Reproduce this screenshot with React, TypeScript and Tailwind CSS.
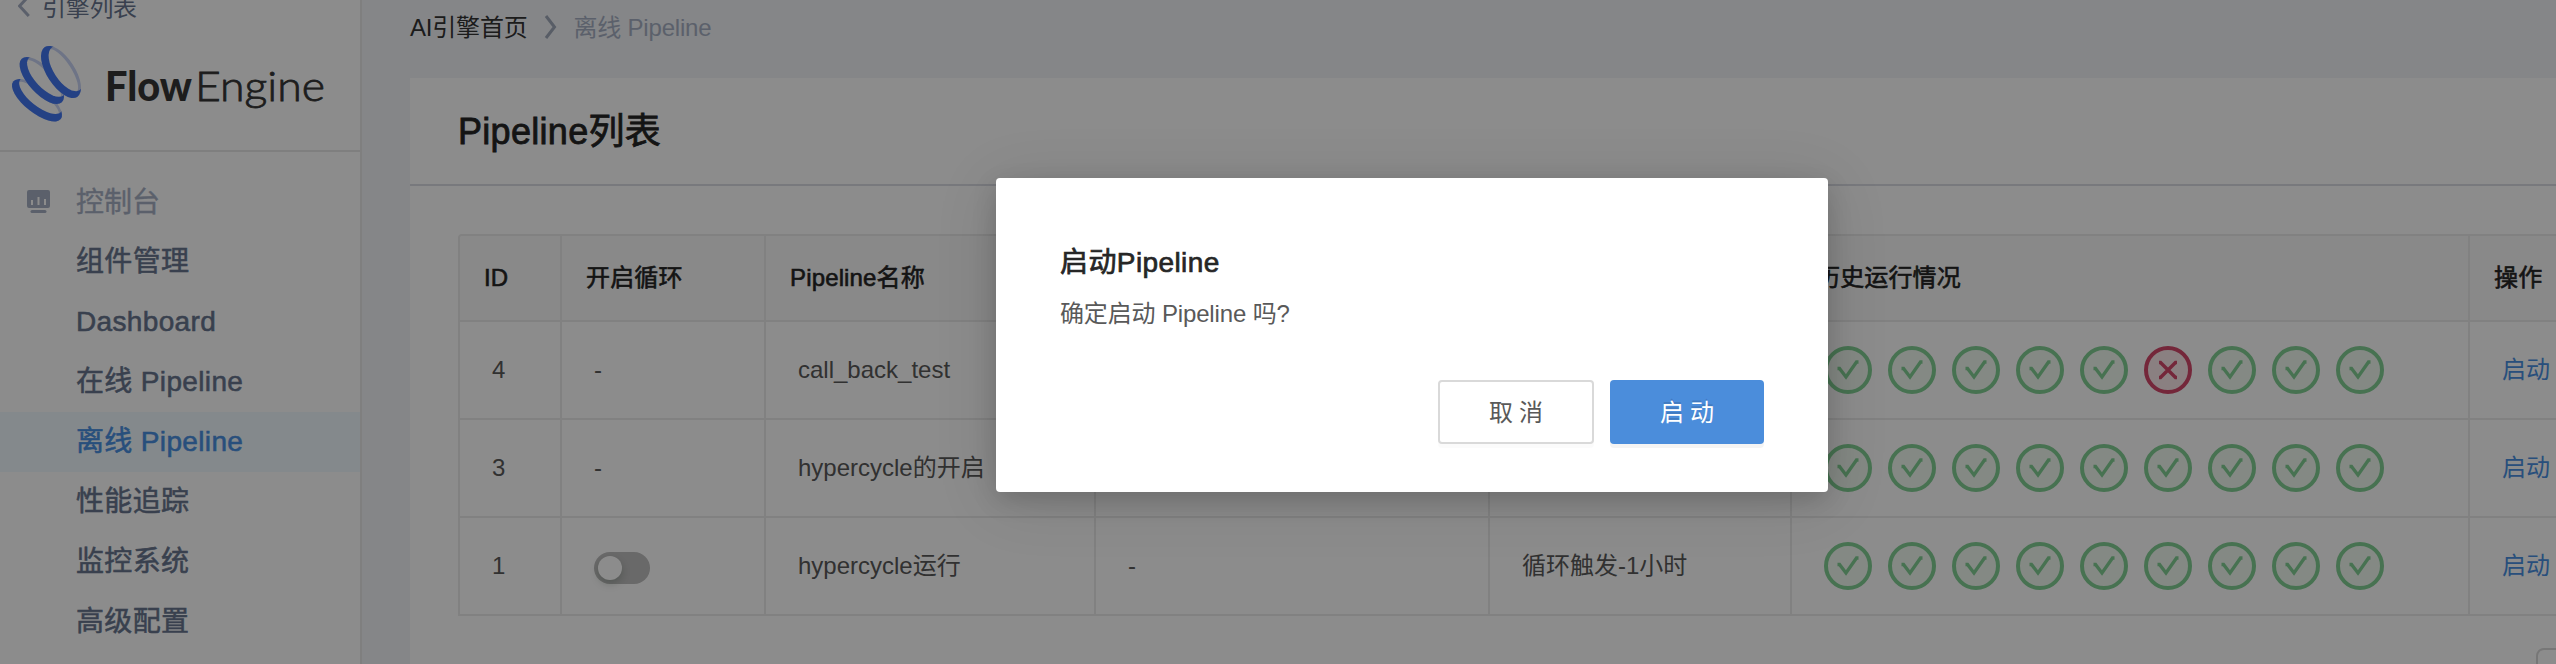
import React from "react";

const FONT = "font-['Liberation_Sans','Noto_Sans_CJK_SC',sans-serif]";

type Run = "ok" | "fail";

interface Pipeline {
  id: number;
  loop: boolean;
  name: string;
  note: string;
  trigger: string;
  history: Run[];
}

const ok = (n: number): Run[] => Array.from({ length: n }, () => "ok" as Run);

const pipelines: Pipeline[] = [
  { id: 4, loop: false, name: "call_back_test", note: "", trigger: "", history: [...ok(5), "fail", ...ok(3)] },
  { id: 3, loop: false, name: "hypercycle的开启", note: "", trigger: "", history: ok(9) },
  { id: 1, loop: true, name: "hypercycle运行", note: "-", trigger: "循环触发-1小时", history: ok(9) },
];

const menu = ["组件管理", "Dashboard", "在线 Pipeline", "离线 Pipeline", "性能追踪", "监控系统", "高级配置"];

const rings = [
  { id: "r1", cx: 37, cy: 70.3, angle: 38.3, rx: 30.3, ry: 12.5 },
  { id: "r2", cx: 41.8, cy: 50.5, angle: 47.4, rx: 29.6, ry: 13 },
  { id: "r3", cx: 61, cy: 42, angle: 57, rx: 29.7, ry: 14 },
];

function Logo() {
  return (
    <svg width="340" height="100" viewBox="0 0 340 100" className="block">
      {rings.map((r) => (
        <g key={r.id} transform={`translate(${r.cx} ${r.cy}) rotate(${r.angle})`}>
          <mask id={`${r.id}-hole`} maskUnits="userSpaceOnUse" x="-40" y="-30" width="80" height="60">
            <rect x="-40" y="-30" width="80" height="60" fill="white" />
            <ellipse cy={-2} rx={r.rx - 4.5} ry={r.ry - 5.5} fill="black" />
          </mask>
          <mask id={`${r.id}-front`} maskUnits="userSpaceOnUse" x="-40" y="-30" width="80" height="60">
            <rect x="-40" y="-30" width="80" height="60" fill="white" />
            <ellipse cy={-6} rx={r.rx - 4.2} ry={r.ry - 1.5} fill="black" />
          </mask>
          <ellipse rx={r.rx} ry={r.ry} fill="#c8d3f4" mask={`url(#${r.id}-hole)`} />
          <ellipse rx={r.rx} ry={r.ry} fill="#4377f0" mask={`url(#${r.id}-front)`} />
        </g>
      ))}
      <text x="105" y="71" fontFamily="Lato" fontWeight="900" fontSize="41" fill="#363636" textLength="87" lengthAdjust="spacingAndGlyphs">
        Flow
      </text>
      <text x="195" y="71" fontFamily="Lato" fontWeight="300" fontSize="41" fill="#363636" stroke="#363636" strokeWidth="0.8" textLength="130" lengthAdjust="spacingAndGlyphs">
        Engine
      </text>
    </svg>
  );
}

function Sidebar() {
  return (
    <aside className="flex h-full w-[362px] shrink-0 flex-col border-r-2 border-[#e8e8e8] bg-white">
      <div className="h-[152px] shrink-0 border-b-2 border-[#e8e8e8]">
        <div className="-mt-2 flex h-[38px] items-center pl-[18px] text-[24px] leading-[30px] text-[#68768f]">
          <svg width="12" height="22" viewBox="0 0 12 22" fill="none" stroke="#a7b0c4" strokeWidth="3" className="-mt-[10px] mr-3">
            <path d="M10.8 1 1.6 11l9.2 10" />
          </svg>
          <span className="-mt-[6px] tracking-[-0.3px]">引擎列表</span>
        </div>
        <Logo />
      </div>
      <nav className="flex flex-col pt-5 text-[28px]">
        <div className="flex h-[60px] items-center pl-[27px] text-[#a7b0c4]">
          <svg width="23" height="24" viewBox="0 0 23 24" className="mr-[26px]">
            <path
              fillRule="evenodd"
              fill="#a7b0c4"
              d="M2 0h19a2 2 0 0 1 2 2v14a2 2 0 0 1-2 2H2a2 2 0 0 1-2-2V2a2 2 0 0 1 2-2ZM4 10v5h2v-5ZM10.500 7v8h2V7ZM17 9v6h2V9Z"
            />
            <rect x="3.500" y="20" width="16" height="3" rx="1.500" fill="#a7b0c4" />
          </svg>
          <span className="pt-[2px] [-webkit-text-stroke:0.4px]">控制台</span>
        </div>
        {menu.map((item) => (
          <div
            key={item}
            className={
              "flex h-[60px] items-center pl-[76px] tracking-[0.35px] [-webkit-text-stroke:0.55px] " +
              (item === "离线 Pipeline" ? "bg-[#f0f9ff] text-[#4a90e2]" : "text-[#68768f]")
            }
          >
            {item}
          </div>
        ))}
      </nav>
    </aside>
  );
}

function RunIcon({ run }: { run: Run }) {
  return run === "ok" ? (
    <svg width="48" height="48" viewBox="0 0 48 48" fill="none" stroke="#82cf94">
      <circle cx="24" cy="24" r="22" fill="#f0f9f1" strokeWidth="4" />
      <path d="M13.500 22.500h2l6.500 8.500 10.500-15h2" strokeWidth="3.300" />
    </svg>
  ) : (
    <svg width="48" height="48" viewBox="0 0 48 48" fill="none" stroke="#d4476a">
      <circle cx="24" cy="24" r="22" fill="#fbeaec" strokeWidth="4" />
      <path d="M15 16.500h1.500l15 15h1.500M33 16.500h-1.500l-15 15H15" strokeWidth="3.500" />
    </svg>
  );
}

const head = "flex shrink-0 items-center border-r-2 border-[#ebebeb] pl-6";
const cell = "flex shrink-0 items-center border-r-2 border-[#ebebeb] pl-8";

function PipelineTable() {
  return (
    <div className="w-[2300px] rounded-tl-[4px] border-l-2 border-t-2 border-[#ebebeb] text-[24px]">
      <div className="flex h-[86px] rounded-tl-[2px] border-b-2 border-[#ebebeb] bg-[#fafafa] tracking-[0.15px] text-[#262626] [-webkit-text-stroke:0.6px]">
        <div className={head + " w-[102px]"}>ID</div>
        <div className={head + " w-[204px]"}>开启循环</div>
        <div className={head + " w-[330px]"}>Pipeline名称</div>
        <div className={head + " w-[394px]"} />
        <div className={head + " w-[302px]"} />
        <div className={head + " w-[678px]"}>历史运行情况</div>
        <div className="flex items-center pl-6">操作</div>
      </div>
      {pipelines.map((p) => (
        <div key={p.id} className="flex h-[98px] border-b-2 border-[#ebebeb] text-[#595959]">
          <div className={cell + " w-[102px]"}>{p.id}</div>
          <div className={cell + " w-[204px]"}>
            {p.loop ? (
              <span className="mt-1 flex h-8 w-14 items-center rounded-full bg-[#bfbfbf] pl-1">
                <span className="size-6 rounded-full bg-white shadow-[0_4px_8px_rgba(0,35,11,0.2)]" />
              </span>
            ) : (
              "-"
            )}
          </div>
          <div className={cell + " w-[330px]"}>{p.name}</div>
          <div className={cell + " w-[394px]"}>{p.note}</div>
          <div className={cell + " w-[302px]"}>{p.trigger}</div>
          <div className={cell + " w-[678px] gap-4"}>
            {p.history.map((run, i) => (
              <RunIcon key={i} run={run} />
            ))}
          </div>
          <div className="flex items-center pl-8 text-[#4a90e2]">启动</div>
        </div>
      ))}
    </div>
  );
}

function ConfirmDialog() {
  return (
    <div className="absolute inset-0 flex items-start bg-black/45 pl-[996px] pt-[178px]">
      <div className="flex h-[314px] w-[832px] flex-col rounded-[4px] bg-white px-16 pt-16 shadow-[0_8px_24px_rgba(0,0,0,0.15),0_8px_64px_rgba(0,0,0,0.12)]">
        <div className="h-[44px] text-[28px] leading-[42px] tracking-[0.4px] text-[#262626] [-webkit-text-stroke:0.7px]">启动Pipeline</div>
        <div className="mt-[10px] text-[24px] leading-[36px] tracking-[-0.15px] text-[#595959]">确定启动 Pipeline 吗?</div>
        <div className="mt-12 flex justify-end gap-4 text-[24px]">
          <button className="flex h-16 w-[156px] items-center justify-center rounded-[4px] border-2 border-[#d9d9d9] bg-white text-[#595959] shadow-[0_4px_0_rgba(0,0,0,0.015)]">
            <span className="-mr-[6px] pt-[2px] tracking-[6px]">取消</span>
          </button>
          <button className="flex h-16 w-[154px] items-center justify-center rounded-[4px] bg-[#4b8ddb] text-white shadow-[0_4px_0_rgba(0,0,0,0.045)] [text-shadow:0_-2px_0_rgba(0,0,0,0.12)]">
            <span className="-mr-[6px] pt-[2px] tracking-[6px]">启动</span>
          </button>
        </div>
      </div>
    </div>
  );
}

export default function App() {
  return (
    <div className={"relative flex h-[664px] w-full overflow-hidden bg-[#f2f4f7] " + FONT}>
      <Sidebar />
      <main className="flex min-w-0 flex-1 flex-col overflow-hidden pl-12">
        <div className="flex h-[78px] shrink-0 items-start pt-[10px] text-[24px] leading-[36px] tracking-[-0.2px]">
          <span className="text-[#333333]">AI引擎首页</span>
          <svg width="14" height="24" viewBox="0 0 14 24" fill="none" stroke="#a0a9bb" strokeWidth="3" className="ml-[17px] mr-[15px] mt-[5px]">
            <path d="M2 1l8.500 11L2 23" />
          </svg>
          <span className="text-[#a7b0c4]">离线 Pipeline</span>
        </div>
        <section className="flex flex-1 flex-col bg-white">
          <h1 className="flex h-[108px] shrink-0 items-center border-b-2 border-[#dadce4] pl-12 pt-[2px] text-[36px] tracking-[0.3px] text-[#262626] [-webkit-text-stroke:0.8px]">
            Pipeline列表
          </h1>
          <div className="pl-12 pt-12">
            <PipelineTable />
          </div>
          <div className="flex justify-end pt-8">
            <div className="-mr-11 h-16 w-16 shrink-0 rounded-[8px] border-2 border-[#d9d9d9]" />
          </div>
        </section>
      </main>
      <ConfirmDialog />
    </div>
  );
}
